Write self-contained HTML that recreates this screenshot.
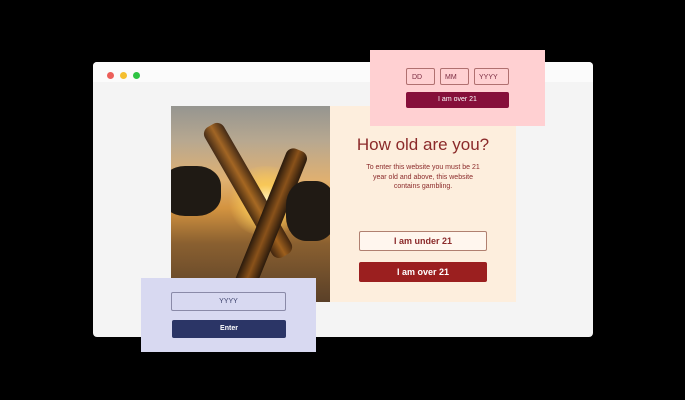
<!DOCTYPE html>
<html><head><style>
*{margin:0;padding:0;box-sizing:border-box}
body{width:685px;height:400px;background:#000;position:relative;overflow:hidden;font-family:"Liberation Sans",sans-serif}
.abs{position:absolute}
</style></head><body>
<div class="abs" style="left:93px;top:62px;width:500px;height:275px;background:#f4f4f4;border-radius:4px;overflow:hidden">
 <div style="height:20px;background:#fbfbfb"></div>
</div>
<div class="abs" style="left:107px;top:72px;width:7px;height:7px;border-radius:50%;background:#ec5f5a"></div>
<div class="abs" style="left:120px;top:72px;width:7px;height:7px;border-radius:50%;background:#f5bf2f"></div>
<div class="abs" style="left:133px;top:72px;width:7px;height:7px;border-radius:50%;background:#2ec443"></div>

<div class="abs" style="left:171px;top:106px;width:159px;height:196px;overflow:hidden;background:linear-gradient(180deg,#959590 0%,#b8a890 18%,#e0b070 38%,#d49440 52%,#8a6030 70%,#5a4028 100%)">
 <div class="abs" style="left:55px;top:60px;width:80px;height:70px;border-radius:50%;background:radial-gradient(circle,#fff4c0 0%,#f8c858 30%,rgba(230,150,40,0) 70%)"></div>
 <div class="abs" style="left:-10px;top:60px;width:60px;height:50px;border-radius:40%;background:#1f1a14"></div>
 <div class="abs" style="left:30px;top:25px;width:22px;height:150px;background:linear-gradient(90deg,#3a200c,#a0601c,#3a200c);transform:rotate(-30deg);transform-origin:top left;border-radius:8px;opacity:.92"></div>
 <div class="abs" style="left:118px;top:40px;width:22px;height:150px;background:linear-gradient(90deg,#2a1a0c,#8a521a,#2a1a0c);transform:rotate(22deg);transform-origin:top left;border-radius:8px"></div>
 <div class="abs" style="left:115px;top:75px;width:50px;height:60px;border-radius:40%;background:#201a14"></div>
</div>

<div class="abs" style="left:330px;top:106px;width:186px;height:196px;background:#fdeedd;text-align:center;color:#8b2a2a">
 <div style="margin-top:29px;font-size:17px">How old are you?</div>
 <div style="margin:8px auto 0;width:120px;font-size:7px;line-height:9.5px">To enter this website you must be 21 year old and above, this website contains gambling.</div>
</div>
<div class="abs" style="left:359px;top:231px;width:128px;height:20px;border:1px solid #b08070;border-radius:2px;color:#8b2a2a;font-size:9px;font-weight:bold;text-align:center;line-height:18px;background:#fff6ee">I am under 21</div>
<div class="abs" style="left:359px;top:262px;width:128px;height:20px;background:#9b1f1f;border-radius:2px;color:#fff;font-size:9px;font-weight:bold;text-align:center;line-height:20px">I am over 21</div>

<div class="abs" style="left:370px;top:50px;width:175px;height:76px;background:#ffd0d2"></div>
<div class="abs" style="left:406px;top:68px;width:29px;height:17px;border:1px solid #b07070;border-radius:2px;font-size:7px;color:#7a2a40;padding:5px 0 0 5px">DD</div>
<div class="abs" style="left:440px;top:68px;width:29px;height:17px;border:1px solid #b07070;border-radius:2px;font-size:7px;color:#7a2a40;padding:5px 0 0 4px">MM</div>
<div class="abs" style="left:474px;top:68px;width:35px;height:17px;border:1px solid #b07070;border-radius:2px;font-size:7px;color:#7a2a40;padding:5px 0 0 4px">YYYY</div>
<div class="abs" style="left:406px;top:92px;width:103px;height:16px;background:#860f3a;border-radius:2px;color:#fff;font-size:7px;text-align:center;line-height:16px">I am over 21</div>

<div class="abs" style="left:141px;top:278px;width:175px;height:74px;background:#d8d9f1"></div>
<div class="abs" style="left:171px;top:292px;width:115px;height:19px;border:1px solid #8a8aa8;border-radius:2px;font-size:7px;color:#3a3f6a;text-align:center;line-height:17px">YYYY</div>
<div class="abs" style="left:172px;top:320px;width:114px;height:18px;background:#2b3566;border-radius:2px;color:#fff;font-size:7px;font-weight:bold;text-align:center;line-height:18px">Enter</div>
</body></html>
